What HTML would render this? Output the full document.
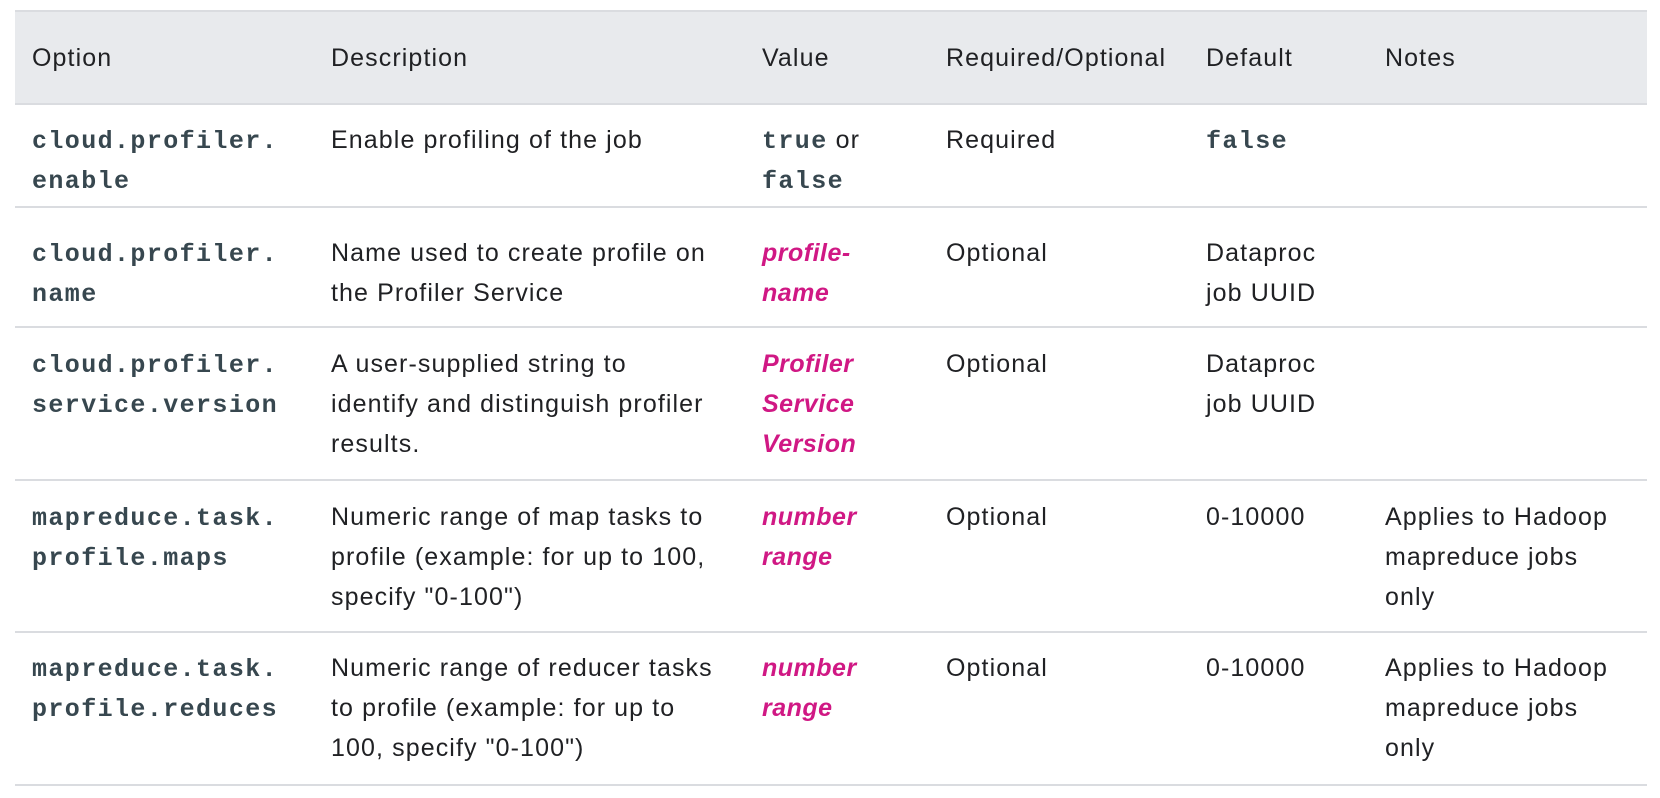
<!DOCTYPE html>
<html><head><style>
body{margin:0;background:#fff;width:1660px;height:798px;overflow:hidden;font-family:"Liberation Sans",Arial,sans-serif;color:#202124;}
table{position:absolute;left:15px;top:10px;width:1632px;border-collapse:collapse;font-size:25px;line-height:40px;letter-spacing:1.1px;}
th{background:#e8eaed;text-align:left;font-weight:500;height:90px;padding:1px 0 0 17px;border-top:2px solid #dadce0;border-bottom:2px solid #dadce0;vertical-align:middle;}
td{vertical-align:top;padding:16px 0 0 17px;border-bottom:2px solid #dadce0;}
tr.r1 td{padding-top:15px}
tr.r2 td{padding-top:25px}
tr.r5 td{padding-top:15px}
code{font-family:"Liberation Mono",monospace;font-weight:bold;color:#37474f;font-size:25px;letter-spacing:1.4px;line-height:30px;}
.v{color:#d01884;font-style:italic;font-weight:bold;letter-spacing:0.5px;}
</style></head><body>
<table>
<colgroup><col style="width:299px"><col style="width:431px"><col style="width:184px"><col style="width:260px"><col style="width:179px"><col></colgroup>
<tr><th>Option</th><th>Description</th><th>Value</th><th>Required/Optional</th><th>Default</th><th>Notes</th></tr>
<tr class="r1" style="height:103px"><td><code>cloud.profiler.<br>enable</code></td><td>Enable profiling of the job</td><td><code>true</code> or<br><code>false</code></td><td>Required</td><td><code>false</code></td><td></td></tr>
<tr class="r2" style="height:120px"><td><code>cloud.profiler.<br>name</code></td><td>Name used to create profile on<br>the Profiler Service</td><td class="v">profile-<br>name</td><td>Optional</td><td>Dataproc<br>job UUID</td><td></td></tr>
<tr style="height:153px"><td><code>cloud.profiler.<br>service.version</code></td><td>A user-supplied string to<br>identify and distinguish profiler<br>results.</td><td class="v">Profiler<br>Service<br>Version</td><td>Optional</td><td>Dataproc<br>job UUID</td><td></td></tr>
<tr style="height:152px"><td><code>mapreduce.task.<br>profile.maps</code></td><td>Numeric range of map tasks to<br>profile (example: for up to 100,<br>specify "0-100")</td><td class="v">number<br>range</td><td>Optional</td><td>0-10000</td><td>Applies to Hadoop<br>mapreduce jobs<br>only</td></tr>
<tr class="r5" style="height:153px"><td><code>mapreduce.task.<br>profile.reduces</code></td><td>Numeric range of reducer tasks<br>to profile (example: for up to<br>100, specify "0-100")</td><td class="v">number<br>range</td><td>Optional</td><td>0-10000</td><td>Applies to Hadoop<br>mapreduce jobs<br>only</td></tr>
</table>
</body></html>
